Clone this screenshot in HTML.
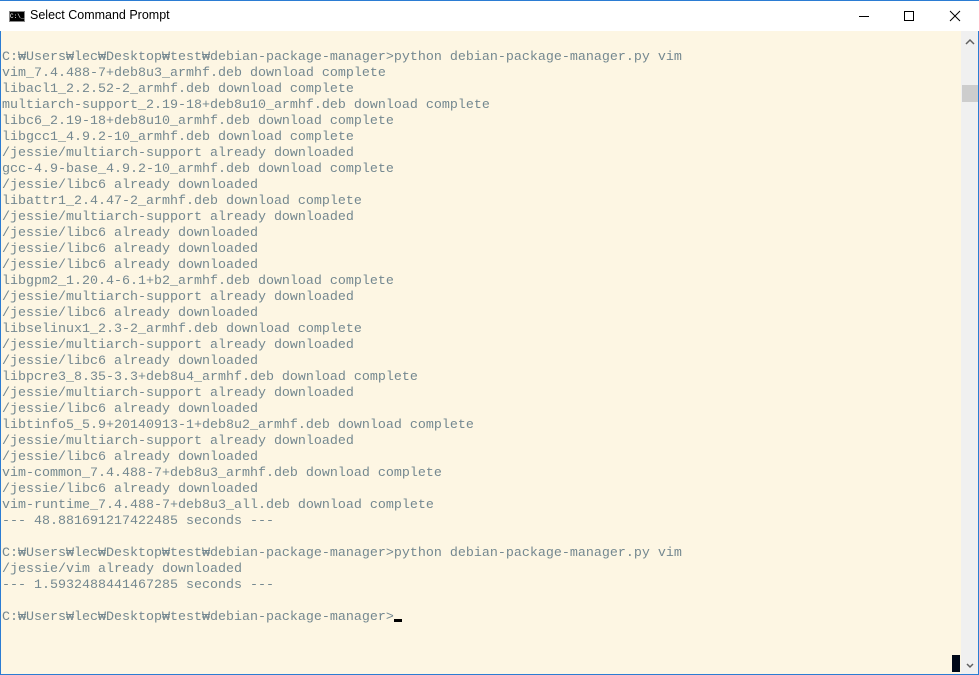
<!DOCTYPE html>
<html><head><meta charset="utf-8"><style>
body{margin:0;width:979px;height:675px;overflow:hidden;background:#fdf6e3;position:relative;font-family:"Liberation Sans",sans-serif}
.tb{position:absolute;left:0;top:0;width:979px;height:31px;background:#fff;border-top:1px solid #2b7cd3;box-sizing:border-box}
.tb .t{position:absolute;left:30px;top:7px;font-size:12.5px;color:#000}
.ic{position:absolute;left:9px;top:10px;width:16px;height:11px;background:#000;border:1px solid #888;box-sizing:border-box;color:#fff;font-size:6px;line-height:9px;font-family:"Liberation Mono",monospace}
pre{position:absolute;left:2px;top:50px;margin:0;font-family:"Liberation Mono",monospace;font-size:13.333px;line-height:16px;color:#748890}
.sb{position:absolute;left:961px;top:31px;width:18px;height:644px;background:#f0f0f0}
.th{position:absolute;left:962px;top:85px;width:16px;height:17px;background:#cdcdcd}
.bb{position:absolute;left:0;top:674px;width:979px;height:1px;background:#2b7cd3}
.lb{position:absolute;left:0;top:31px;width:1px;height:644px;background:#2b7cd3}
.rb{position:absolute;left:978px;top:31px;width:1px;height:644px;background:#2b7cd3}
.cur{position:absolute;left:394px;top:619px;width:8px;height:3px;background:#000}
.blk{position:absolute;left:952px;top:655px;width:8px;height:17px;background:#000818}
</style></head><body>
<div class="tb"><div class="ic">C:\_</div><div class="t">Select Command Prompt</div>
<svg style="position:absolute;left:840px;top:0" width="139" height="31">
<line x1="19" y1="15.5" x2="29" y2="15.5" stroke="#000"/>
<rect x="64.5" y="10.5" width="9" height="9" fill="none" stroke="#000"/>
<path d="M110 10 L120 20 M120 10 L110 20" stroke="#000"/>
</svg></div>
<div class="sb"></div><div class="th"></div>
<svg style="position:absolute;left:961px;top:36px" width="18" height="12"><path d="M5 8 L9 4 L13 8" stroke="#606060" stroke-width="1.5" fill="none"/></svg>
<svg style="position:absolute;left:961px;top:660px" width="18" height="12"><path d="M6 4 L9 7 L12 4" stroke="#606060" stroke-width="1.5" fill="none"/></svg>
<pre>C:₩Users₩lec₩Desktop₩test₩debian-package-manager>python debian-package-manager.py vim
vim_7.4.488-7+deb8u3_armhf.deb download complete
libacl1_2.2.52-2_armhf.deb download complete
multiarch-support_2.19-18+deb8u10_armhf.deb download complete
libc6_2.19-18+deb8u10_armhf.deb download complete
libgcc1_4.9.2-10_armhf.deb download complete
/jessie/multiarch-support already downloaded
gcc-4.9-base_4.9.2-10_armhf.deb download complete
/jessie/libc6 already downloaded
libattr1_2.4.47-2_armhf.deb download complete
/jessie/multiarch-support already downloaded
/jessie/libc6 already downloaded
/jessie/libc6 already downloaded
/jessie/libc6 already downloaded
libgpm2_1.20.4-6.1+b2_armhf.deb download complete
/jessie/multiarch-support already downloaded
/jessie/libc6 already downloaded
libselinux1_2.3-2_armhf.deb download complete
/jessie/multiarch-support already downloaded
/jessie/libc6 already downloaded
libpcre3_8.35-3.3+deb8u4_armhf.deb download complete
/jessie/multiarch-support already downloaded
/jessie/libc6 already downloaded
libtinfo5_5.9+20140913-1+deb8u2_armhf.deb download complete
/jessie/multiarch-support already downloaded
/jessie/libc6 already downloaded
vim-common_7.4.488-7+deb8u3_armhf.deb download complete
/jessie/libc6 already downloaded
vim-runtime_7.4.488-7+deb8u3_all.deb download complete
--- 48.881691217422485 seconds ---

C:₩Users₩lec₩Desktop₩test₩debian-package-manager>python debian-package-manager.py vim
/jessie/vim already downloaded
--- 1.5932488441467285 seconds ---

C:₩Users₩lec₩Desktop₩test₩debian-package-manager></pre>
<div class="cur"></div><div class="blk"></div>
<div class="lb"></div><div class="rb"></div><div class="bb"></div>
</body></html>
